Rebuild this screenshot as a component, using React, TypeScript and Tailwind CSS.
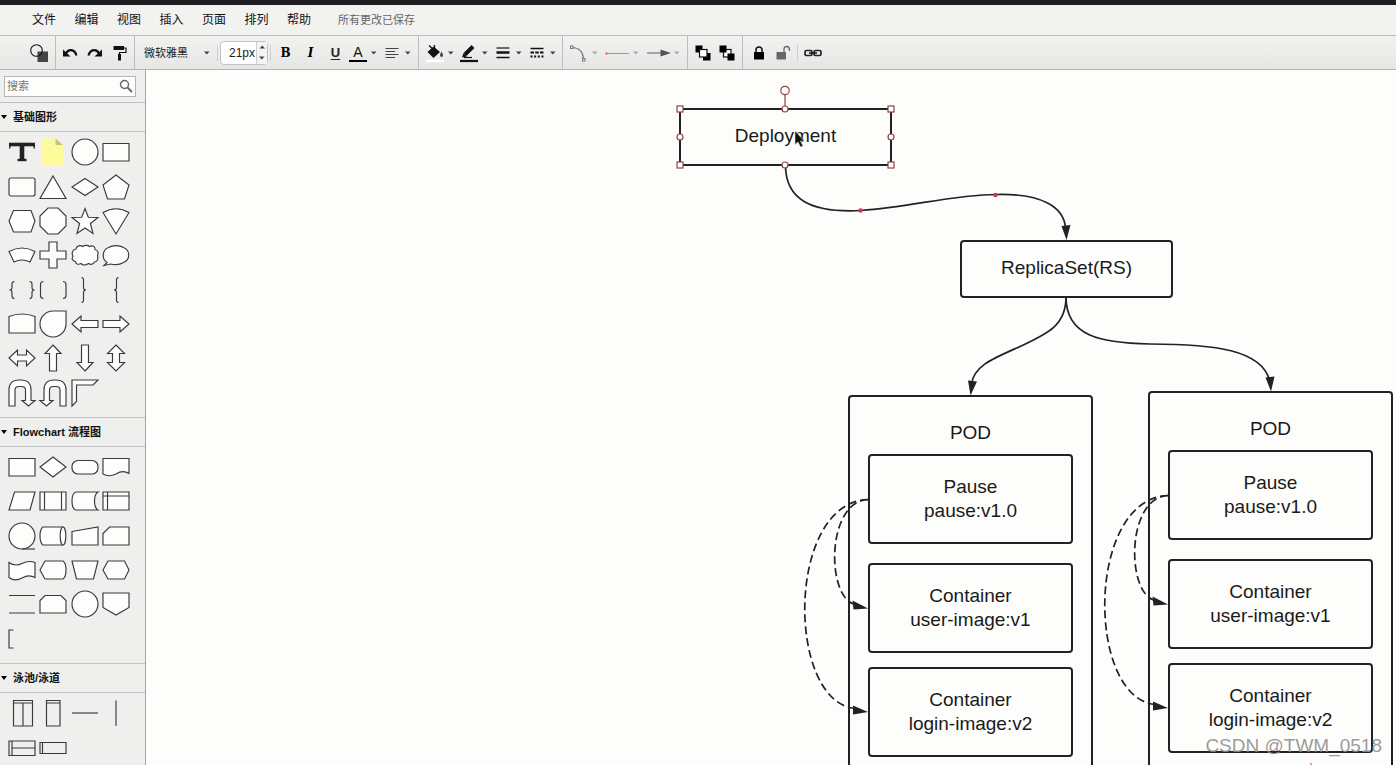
import { useState, type ReactNode } from "react"

const MENU_ITEMS = ["文件", "编辑", "视图", "插入", "页面", "排列", "帮助"]

interface Shape {
  name: string
  art: ReactNode
}

const BASIC_SHAPES: Shape[] = [
  {
    name: "文本",
    art: (
      <g stroke="#222" fill="none">
        <path d="M1 6.500h26" strokeWidth="3.600" />
        <path d="M1.800 5v5.500M26.200 5v5.500" strokeWidth="1.400" />
        <path d="M14 6v16" strokeWidth="4.600" />
        <path d="M9.500 22h9" strokeWidth="2.400" />
      </g>
    ),
  },
  {
    name: "便签",
    art: (
      <g stroke="none">
        <path d="M2.500 .5H17l7.500 7v20h-22z" fill="#fbfb9c" />
        <path d="M16.500 .5v6.500h7.500z" fill="#c4c478" />
      </g>
    ),
  },
  { name: "圆形", art: <circle cx="14" cy="14" r="13" /> },
  { name: "矩形", art: <path d="M1 5.500h26v17.500h-26z" /> },
  { name: "圆角矩形", art: <rect x="1" y="5" width="26" height="18" rx="2" /> },
  { name: "三角形", art: <path d="M14 3l13 22.500H1z" /> },
  { name: "菱形", art: <path d="M14 5.500L27 14 14 22.500 1 14z" /> },
  { name: "五边形", art: <path d="M14 2l13 10-4.500 14h-17L1 12z" /> },
  { name: "六边形", art: <path d="M5.500 3.500h17.500L27 14l-4 11H5.500L1 14z" /> },
  { name: "八边形", art: <path d="M9 1h10l8 8v10l-8 8H9l-8-8V9z" /> },
  {
    name: "星形",
    art: <path d="M14 1.500l3.300 8.700 9.700.3-7.600 6 2.600 10L14 21l-8 5.500 2.600-10-7.600-6 9.700-.3z" />,
  },
  { name: "扇形", art: <path d="M1 5.500Q14-2 27 5.500L14 27z" /> },
  { name: "弧形", art: <path d="M1 10.500Q14 3.500 27 10.500l-5 10.500Q14 17 6 21z" /> },
  { name: "十字", art: <path d="M10 1h8v9h9v8h-9v9h-8v-9H1v-8h9z" /> },
  {
    name: "云",
    art: (
      <path d="M5 8C5.500 4.500 9.500 4 11.500 5.500C13.500 4 17 4 18.500 5.500C22 4 24 5.500 24 8.500C27.500 9.500 27.500 12.500 26.500 14.500C27.500 18 26.500 20.500 23.500 21C22 23.800 19.500 23.800 17.500 22.500C14.500 24.500 12 24.500 10 22.500C7 24 4.500 23 4.500 20.500C1 20 .5 17.500 2 15.500C.5 12.500 1 8.500 5 8z" />
    ),
  },
  {
    name: "对话",
    art: <path d="M5 21.500C-.5 18 0 9 6.500 6.500c4-2.500 11-2.500 15 0c7 3 7 12 0 15c-4 2.500-9 2.500-13 1.500L2 24.500z" />,
  },
  {
    name: "大括号对",
    art: (
      <path
        fill="none"
        d="M6.500 5.500q-2.500 0-2.500 2.500v3.500q0 2.500-2.500 2.500q2.500 0 2.500 2.500v3.500q0 2.500 2.500 2.500M21.500 5.500q2.500 0 2.500 2.500v3.500q0 2.500 2.500 2.500q-2.500 0-2.500 2.500v3.500q0 2.500-2.500 2.500"
      />
    ),
  },
  {
    name: "括号对",
    art: (
      <path
        fill="none"
        d="M4.500 5.500q-3 0-3 3v11q0 3 3 3M24 5.500q3 0 3 3v11q0 3-3 3"
      />
    ),
  },
  {
    name: "右大括号",
    art: (
      <path
        fill="none"
        d="M10.500 1.500q2 0 2 2.500v7.500q0 2.500 2.500 2.500q-2.500 0-2.500 2.500v7.500q0 2.500-2 2.500"
      />
    ),
  },
  {
    name: "左大括号",
    art: (
      <path
        fill="none"
        d="M16.500 1.500q-2 0-2 2.500v7.500q0 2.500-2.500 2.500q2.500 0 2.500 2.500v7.500q0 2.500 2 2.500"
      />
    ),
  },
  { name: "卡片", art: <path d="M1 6.500Q14 1.500 27 6.500V23H1z" /> },
  { name: "水滴", art: <path d="M14 1h13v13a13 13 0 1 1-13-13z" /> },
  { name: "左箭头", art: <path d="M1 14l9-8v4.500h17v7H10V22z" /> },
  { name: "右箭头", art: <path d="M27 14l-9-8v4.500H1v7h17V22z" /> },
  {
    name: "左右箭头",
    art: <path d="M1 14l8.500-8v5h9V6L27 14l-8.500 8v-5h-9v5z" />,
  },
  { name: "上箭头", art: <path d="M14 1l8 8.500h-4.500V27h-7V9.500H6z" /> },
  { name: "下箭头", art: <path d="M14 27l8-8.500h-4.500V1h-7v17.500H6z" /> },
  {
    name: "上下箭头",
    art: <path d="M14 1l8.500 8.500h-5v9h5L14 27l-8.500-8.500h5v-9h-5z" />,
  },
  {
    name: "右转箭头",
    art: (
      <path d="M1 27V11q0-10 10-10h2q10 0 10 10v10.500h4L20.500 27L14 21.500h3.500V11q0-3.500-4-3.500h-2.500q-4 0-4 3.500V27z" />
    ),
  },
  {
    name: "左转箭头",
    art: (
      <path d="M27 27V11q0-10-10-10h-2Q5 1 5 11v10.500H1L7.500 27L14 21.500h-3.500V11q0-3.500 4-3.500h2.500q4 0 4 3.500V27z" />
    ),
  },
  { name: "拐角", art: <path d="M1 1h26l-5 5H5.500v16.500L1 27z" /> },
]

const FLOW_SHAPES: Shape[] = [
  { name: "流程", art: <path d="M1 5.500h26V23H1z" /> },
  { name: "判定", art: <path d="M14 4l13 10-13 10L1 14z" /> },
  {
    name: "开始/结束",
    art: <rect x="1" y="7.500" width="26" height="13.500" rx="6" />,
  },
  { name: "文档", art: <path d="M1 5.500h26v15q-6-4-13 .5q-7 3.500-13 0z" /> },
  { name: "数据", art: <path d="M6.500 5H27l-5 18H1z" /> },
  {
    name: "子流程",
    art: <path d="M1 5h26v18H1zM5.500 5v18M22.500 5v18" />,
  },
  {
    name: "外部数据",
    art: <path d="M27 5H5Q1 6 1 14t4 9h22q-3.500-2-3.500-9T27 5z" />,
  },
  {
    name: "内部存储",
    art: <path d="M1 5h26v18H1zM5.500 5v18M1 9h26" />,
  },
  {
    name: "队列数据",
    art: (
      <>
        <circle cx="14" cy="14" r="13" />
        <path d="M14 27h13" />
      </>
    ),
  },
  {
    name: "数据库",
    art: (
      <>
        <path d="M24.500 5H4Q1 7 1 14t3 9h20.500" />
        <ellipse cx="24" cy="14" rx="2.800" ry="9" />
      </>
    ),
  },
  { name: "人工输入", art: <path d="M1 9.500L27 5v18H1z" /> },
  { name: "卡片", art: <path d="M7.500 5H27v18H1V11.500z" /> },
  {
    name: "条带",
    art: <path d="M1 6.500q6 4.500 13 1T27 6.500v15q-6-3.500-13 .5T1 21.500z" />,
  },
  {
    name: "展示",
    art: <path d="M6 5h18q3 2 3 9t-3 9H6l-5-9z" />,
  },
  { name: "人工操作", art: <path d="M1 5h26l-4.500 18h-17z" /> },
  { name: "准备", art: <path d="M6 5h16.500L27 14l-4.500 9H6l-5-9z" /> },
  { name: "并行模式", art: <path d="M1 5.500h26M1 23h26" /> },
  {
    name: "循环限值",
    art: <path d="M6 5.500h16l5 5V23H1V10.500z" />,
  },
  { name: "页面内引用", art: <circle cx="14" cy="14" r="13" /> },
  { name: "跨页引用", art: <path d="M1 3h26v14.500l-13 7.500-13-7.500z" /> },
  { name: "注释", art: <path fill="none" d="M5.500 5H1v18h4.500" /> },
]

const LANE_SHAPES: Shape[] = [
  {
    name: "垂直泳池",
    art: <path fill="none" d="M5.500 1.500h19V27h-19zM5.500 4h19M15 4v23" />,
  },
  { name: "垂直泳道", art: <path fill="none" d="M7.500 1.500h13.500V27H7.500zM7.500 4H21" /> },
  { name: "水平分隔符", art: <path d="M1 14h26" /> },
  { name: "垂直分隔符", art: <path d="M14 1.500V27" /> },
  {
    name: "水平泳池",
    art: <path fill="none" d="M1 7h26v14.500H1zM4 7v14.500M4 14h23" />,
  },
  { name: "水平泳道", art: <path fill="none" d="M1 8.500h26V19.500H1zM3.500 8.500v11" /> },
]

function Caret({ dim }: { dim?: boolean }) {
  return (
    <svg
      viewBox="0 0 6 4"
      className={`h-1 w-1.5 shrink-0 ${dim ? "fill-[#a9a9a9]" : "fill-[#444]"}`}
    >
      <path d="M0 .5h5.500L2.800 3.500z" />
    </svg>
  )
}

function ToolButton({
  label,
  className,
  children,
}: {
  label: string
  className: string
  children: ReactNode
}) {
  return (
    <button
      type="button"
      aria-label={label}
      className={`flex h-full shrink-0 items-center hover:bg-black/5 ${className}`}
    >
      {children}
    </button>
  )
}

function Icon({ wide, children }: { wide?: boolean; children: ReactNode }) {
  return (
    <svg
      viewBox={wide ? "0 0 26 20" : "0 0 20 20"}
      className={`h-5 shrink-0 ${wide ? "w-[26px]" : "w-5"}`}
      fill="none"
      stroke="#111"
    >
      {children}
    </svg>
  )
}

function Toolbar() {
  const [fontSize, setFontSize] = useState(21)

  return (
    <div className="flex h-[34px] shrink-0 border-b border-[#b4b4b4] bg-linear-to-b from-[#f2f2f1] to-[#e6e6e5]">
      <div className="flex w-14 justify-end border-r border-[#bdbdbd] pr-1.5">
        <ToolButton label="图形" className="">
          <Icon>
            <rect x="8.500" y="8.500" width="10.500" height="10.500" fill="#444" stroke="none" />
            <circle cx="7.500" cy="7.500" r="5.800" strokeWidth="1.100" />
          </Icon>
        </ToolButton>
      </div>

      <div className="flex w-[79px] justify-center border-r border-[#bdbdbd]">
        <ToolButton label="撤销" className="w-[25px] justify-center">
          <Icon>
            <path d="M6 10.500C8 6 14.500 5.500 16.500 12.500" strokeWidth="2.200" />
            <path d="M3 6.500v7h7.500z" fill="#111" stroke="none" />
          </Icon>
        </ToolButton>
        <ToolButton label="恢复" className="w-[25px] justify-center">
          <Icon>
            <path d="M14 10.500C12 6 5.500 5.500 3.500 12.500" strokeWidth="2.200" />
            <path d="M17 6.500v7H9.500z" fill="#111" stroke="none" />
          </Icon>
        </ToolButton>
        <ToolButton label="格式刷" className="w-[25px] justify-center">
          <Icon>
            <path d="M3.500 5h10.500" strokeWidth="4" />
            <path d="M14 5h2v4.500H9.500V12" strokeWidth="1.200" />
            <path d="M9.500 11v6.500" strokeWidth="3" />
          </Icon>
        </ToolButton>
      </div>

      <div className="flex w-[284px] items-center border-r border-[#bdbdbd] pl-2">
        <div className="relative flex h-full w-[74px] items-center">
          <select
            aria-label="字体"
            className="h-6 w-full appearance-none bg-transparent pl-px text-[11px] leading-6 text-[#222] outline-none"
          >
            <option>微软雅黑</option>
            <option>宋体</option>
            <option>黑体</option>
          </select>
          <span className="pointer-events-none absolute right-[7px] flex">
            <Caret />
          </span>
        </div>
        <div className="h-4 w-px bg-[#cfcfcf]" />
        <div className="ml-0.5 flex h-6 w-12 rounded-sm border border-[#c3c3c3] bg-white">
          <input
            aria-label="字号"
            value={`${fontSize}px`}
            onChange={(e) => setFontSize(parseInt(e.target.value) || 0)}
            className="w-[35px] min-w-0 bg-transparent pr-px text-right text-xs text-[#222] outline-none"
          />
          <div className="flex flex-1 flex-col border-l border-[#cfcfcf] bg-[#f3f3f3]">
            <button
              type="button"
              aria-label="增大字号"
              onClick={() => setFontSize(fontSize + 1)}
              className="flex flex-1 rotate-180 items-center justify-center"
            >
              <Caret />
            </button>
            <button
              type="button"
              aria-label="减小字号"
              onClick={() => setFontSize(fontSize - 1)}
              className="flex flex-1 items-center justify-center"
            >
              <Caret />
            </button>
          </div>
        </div>
        <div className="ml-0.5 h-4 w-px bg-[#cfcfcf]" />
        <ToolButton
          label="粗体"
          className="ml-0.5 w-[25px] justify-center font-['DejaVu_Serif',serif] text-xs font-bold text-black"
        >
          B
        </ToolButton>
        <ToolButton
          label="斜体"
          className="w-[25px] justify-center font-['DejaVu_Serif',serif] text-xs font-bold text-black italic"
        >
          I
        </ToolButton>
        <ToolButton
          label="下划线"
          className="w-[25px] justify-center text-[13px] font-bold text-[#222] underline underline-offset-2"
        >
          U
        </ToolButton>
        <ToolButton label="字体颜色" className="w-[34px] gap-[3px]">
          <span className="flex w-5 flex-col items-center">
            <span className="text-sm leading-4 text-[#111]">A</span>
            <span className="h-0.5 w-[18px] bg-black" />
          </span>
          <Caret />
        </ToolButton>
        <ToolButton label="对齐方式" className="w-[34px] gap-[3px]">
          <Icon>
            <path
              d="M3.500 5.500h13M3.500 8.500h9.500M3.500 11.500h13M3.500 14.500h9.500"
              strokeWidth="1.100"
              stroke="#444"
            />
          </Icon>
          <Caret />
        </ToolButton>
      </div>

      <div className="flex w-36 border-r border-[#bdbdbd] pl-1.5">
        <ToolButton label="填充颜色" className="w-[34px] gap-[3px]">
          <Icon>
            <path d="M1 18h18" stroke="#fff" strokeWidth="2.500" />
            <path d="M2.500 9L8.500 3.500 15 9l-6.500 6z" fill="#111" stroke="none" />
            <path d="M4 2.500l5 4.500M9.500 2v6" strokeWidth="1.300" />
            <path d="M16.500 8.500q3 5 0 5.500q-3-.5 0-5.500z" fill="#444" stroke="none" />
          </Icon>
          <Caret />
        </ToolButton>
        <ToolButton label="线条颜色" className="w-[34px] gap-[3px]">
          <Icon>
            <path d="M1 18h18" strokeWidth="2.200" />
            <path d="M6 11.500L14 3.500" strokeWidth="4" />
            <path d="M3 14.500l1.500-4.500 3.500 3.500z" fill="#111" stroke="none" />
            <path d="M5 14.500h8" strokeWidth="1.200" />
          </Icon>
          <Caret />
        </ToolButton>
        <ToolButton label="线条宽度" className="w-[34px] gap-[3px]">
          <Icon>
            <path d="M3.500 5h13" strokeWidth="1.200" />
            <path d="M3.500 9.500h13" strokeWidth="2.500" />
            <path d="M3.500 14.500h13" strokeWidth="1.500" />
          </Icon>
          <Caret />
        </ToolButton>
        <ToolButton label="线条样式" className="w-[34px] gap-[3px]">
          <Icon>
            <path d="M3.500 5.500h13" strokeWidth="1.500" />
            <path d="M3.500 9.500h13" strokeWidth="1.800" strokeDasharray="3.500 1.250" />
            <path d="M3.500 13.500h13" strokeWidth="1.800" strokeDasharray="2 1.650" />
          </Icon>
          <Caret />
        </ToolButton>
      </div>

      <div className="flex w-[125px] border-r border-[#bdbdbd]">
        <ToolButton label="连线类型" className="w-[41px] gap-[3px]">
          <Icon wide>
            <path d="M9 4.500Q20 5 20.500 16" stroke="#777" strokeWidth="1.200" />
            <rect x="7.500" y="3" width="2.500" height="2.500" stroke="#777" fill="#eee" />
            <rect x="19.500" y="15.500" width="2.500" height="2.500" stroke="#777" fill="#eee" />
          </Icon>
          <Caret dim />
        </ToolButton>
        <ToolButton label="起点" className="w-[41px] gap-[3px]">
          <Icon wide>
            <path d="M2 10.500h23" stroke="#999" />
            <circle cx="2.500" cy="10.500" r="1.200" fill="#d66" stroke="none" />
          </Icon>
          <Caret dim />
        </ToolButton>
        <ToolButton label="终点" className="w-[41px] gap-[3px]">
          <Icon wide>
            <path d="M2 10h16" stroke="#777" strokeWidth="1.200" />
            <path d="M15.500 6.500L26 10l-10.500 3.500z" fill="#555" stroke="none" />
          </Icon>
          <Caret dim />
        </ToolButton>
      </div>

      <div className="flex w-[55px] justify-center border-r border-[#bdbdbd]">
        <ToolButton label="置于顶层" className="w-6 justify-center">
          <Icon>
            <path d="M2.500 2.500h7v7h-7zM10 10h7.500v7.500H10z" fill="#000" stroke="none" />
            <rect x="6.500" y="6.500" width="7.500" height="7.500" fill="#fff" strokeWidth="1.200" />
          </Icon>
        </ToolButton>
        <ToolButton label="置于底层" className="w-6 justify-center">
          <Icon>
            <rect x="6.500" y="6.500" width="7.500" height="7.500" fill="#fff" strokeWidth="1.200" />
            <path d="M2.500 2.500h7v7h-7zM10.500 10.500h7v7h-7z" fill="#000" stroke="none" />
          </Icon>
        </ToolButton>
      </div>

      <div className="flex items-center pl-1">
        <ToolButton label="锁定" className="w-6 justify-center">
          <Icon>
            <rect x="5" y="9" width="10" height="7.500" fill="#000" stroke="none" />
            <path d="M7 9V7q0-3 3-3t3 3v2" strokeWidth="1.500" />
          </Icon>
        </ToolButton>
        <ToolButton label="解锁" className="w-6 justify-center">
          <Icon>
            <rect x="3.500" y="9" width="9.500" height="7.500" fill="#666" stroke="none" />
            <path d="M11 9V6.500q0-3 2.700-3t2.700 3V8" strokeWidth="1.300" stroke="#666" />
          </Icon>
        </ToolButton>
        <div className="ml-0.5 h-4 w-px bg-[#cfcfcf]" />
        <ToolButton label="链接" className="ml-1 w-[22px] justify-center">
          <Icon>
            <rect x="2" y="7.500" width="7" height="5" rx="1.500" strokeWidth="1.700" stroke="#222" />
            <rect x="11" y="7.500" width="7" height="5" rx="1.500" strokeWidth="1.700" stroke="#222" />
            <path d="M6 10h8" strokeWidth="1.700" stroke="#222" />
          </Icon>
        </ToolButton>
      </div>
    </div>
  )
}

function ShapeSection({
  title,
  shapes,
  gridClass,
}: {
  title: string
  shapes: Shape[]
  gridClass: string
}) {
  const [open, setOpen] = useState(true)

  return (
    <section className="border-t border-[#c4c4c4]">
      <button
        type="button"
        onClick={() => setOpen(!open)}
        className="flex h-[29px] w-full items-center gap-1.5 border-b border-[#c4c4c4] pl-px text-left text-[11px] font-bold text-[#111]"
      >
        <svg viewBox="0 0 6 4" className="h-1 w-1.5 fill-black">
          <path d="M0 0h6L3 4z" />
        </svg>
        {title}
      </button>
      {open && (
        <div className={`mt-[3px] mb-[7px] grid grid-cols-4 pr-[13px] pl-1.5 ${gridClass}`}>
          {shapes.map((shape, i) => (
            <button
              key={i}
              type="button"
              aria-label={shape.name}
              className="flex items-center justify-center"
            >
              <svg
                viewBox="0 0 28 28"
                className="size-7 overflow-visible"
                fill="#fdfdfb"
                stroke="#3a3a3a"
                strokeWidth="1.150"
              >
                {shape.art}
              </svg>
            </button>
          ))}
        </div>
      )}
    </section>
  )
}

function Sidebar() {
  return (
    <aside className="w-[146px] shrink-0 overflow-hidden border-r border-[#a3a3a3] bg-[#efefee]">
      <div className="flex h-8 items-center pr-[9px] pl-1">
        <div className="flex h-[21px] w-full items-center border border-[#b5b5b5] bg-[#fdfdfc] px-0.5">
          <input
            type="text"
            aria-label="搜索"
            placeholder="搜索"
            className="h-full w-full min-w-0 bg-transparent text-[11px] outline-none placeholder:text-[#777]"
          />
          <svg viewBox="0 0 14 14" className="size-3.5 shrink-0" fill="none" stroke="#666">
            <circle cx="5.500" cy="5.500" r="4" strokeWidth="1.400" />
            <path d="M8.500 8.500l4.500 4.500" strokeWidth="1.800" />
          </svg>
        </div>
      </div>
      <ShapeSection title="基础图形" shapes={BASIC_SHAPES} gridClass="h-[275px] grid-rows-8" />
      <ShapeSection title="Flowchart 流程图" shapes={FLOW_SHAPES} gridClass="h-[206px] grid-rows-6" />
      <ShapeSection title="泳池/泳道" shapes={LANE_SHAPES} gridClass="h-[69px] grid-rows-2" />
    </aside>
  )
}

function Box({ lines, className }: { lines: string[]; className: string }) {
  return (
    <div
      className={`flex flex-col items-center justify-center border-2 border-[#222] ${className}`}
    >
      {lines.map((line) => (
        <span key={line}>{line}</span>
      ))}
    </div>
  )
}

function Pod({ className }: { className: string }) {
  return (
    <div
      className={`absolute flex h-[440px] w-[245px] flex-col rounded-[4px] border-2 border-[#222] px-[18px] pt-6 ${className}`}
    >
      <span className="text-center">POD</span>
      <Box lines={["Pause", "pause:v1.0"]} className="mt-[9px] h-[90px] rounded-[4px]" />
      <Box lines={["Container", "user-image:v1"]} className="mt-[19px] h-[90px] rounded-[4px]" />
      <Box lines={["Container", "login-image:v2"]} className="mt-[14px] h-[90px] rounded-[4px]" />
    </div>
  )
}

// loops from a pod's pause box to its two containers
function PodLinks({ x, y }: { x: number; y: number }) {
  return (
    <g transform={`translate(${x} ${y})`}>
      <g strokeDasharray="8 4">
        <path d="M0 0C-42 2-42 98-13 105" />
        <path d="M0 0C-82 3-82 202-13 209" />
      </g>
      <g fill="#222" stroke="none">
        <path d="M0 109l-15.500-8 1 9z" />
        <path d="M0 212.500l-15-6.500v9z" />
      </g>
    </g>
  )
}

const CORNERS = [
  [534, 39],
  [745, 39],
  [534, 95],
  [745, 95],
]

const MIDPOINTS = [
  [639, 39],
  [639, 95],
  [534, 67],
  [745, 67],
]

function Canvas() {
  return (
    <main className="relative flex-1 overflow-hidden bg-[#fdfdfb] text-[19px] leading-6 text-[#1a1a1a]">
      <Box
        lines={["Deployment"]}
        className="absolute top-[38px] left-[533px] h-[58px] w-[213px] pb-0.5"
      />
      <Box
        lines={["ReplicaSet(RS)"]}
        className="absolute top-[170px] left-[814px] h-[58px] w-[213px] rounded-[4px] pb-0.5"
      />
      <Pod className="top-[325px] left-[702px]" />
      <Pod className="top-[321px] left-[1002px]" />

      <svg
        className="pointer-events-none absolute inset-0 h-full w-full"
        fill="none"
        stroke="#222"
        strokeWidth="1.700"
      >
        <path d="M639.500 95C639.500 129 664 143 715 140.500C766 137 804 125 851 124.500C896 123.500 918 137 919.500 158" />
        <path d="M920 227C920 256 901 264 873 277C846 289 828 296 825.500 314" />
        <path d="M920 227C920 266 954 273 1004 274C1069 274 1115 280 1123.500 310" />
        <g fill="#222" stroke="none">
          <path d="M920.500 170l-5-14 9-1z" />
          <path d="M824.500 325.500l-2.500-15 9 1z" />
          <path d="M1125 321.500l-5.500-14 9-1z" />
        </g>
        <PodLinks x={722} y={429.5} />
        <PodLinks x={1022} y={425.5} />

        {/* selection handles */}
        <g stroke="#8f4545" strokeWidth="1.200" fill="#fff">
          <path d="M639 25v11" />
          <circle cx="639" cy="20.500" r="4.200" />
          {CORNERS.map(([x, y]) => (
            <rect key={`${x}-${y}`} x={x - 3} y={y - 3} width="6" height="6" />
          ))}
          {MIDPOINTS.map(([x, y]) => (
            <circle key={`${x}-${y}`} cx={x} cy={y} r="3" />
          ))}
        </g>
        <g fill="#d2374f" stroke="none">
          <circle cx="714.500" cy="140.500" r="2.200" />
          <circle cx="849.500" cy="125" r="2.200" />
          <path d="M1164 692l3 4h-2z" />
        </g>

        <path
          d="M649 61v13.500l3-2.500 2.500 5 2.500-1-2.500-5h4z"
          fill="#111"
          stroke="#ddd"
          strokeWidth="0.600"
        />
      </svg>

      <div className="absolute right-[14px] bottom-[7px] text-[19px] text-[#8f8f8f]/90">
        CSDN @TWM_0518
      </div>
    </main>
  )
}

export default function App() {
  return (
    <div className="flex h-screen flex-col overflow-hidden bg-[#fdfdfb] font-['Liberation_Sans','Noto_Sans_CJK_SC',sans-serif]">
      <div className="h-[5px] shrink-0 bg-[#1f1f23]" />
      <header className="flex h-[31px] shrink-0 items-center border-b border-[#bdbdbd] bg-[#f2f2f1] pl-8">
        <nav className="flex w-[279px] justify-between text-xs text-[#111]">
          {MENU_ITEMS.map((item) => (
            <button key={item} type="button">
              {item}
            </button>
          ))}
        </nav>
        <span className="ml-[27px] text-[11px] text-[#666]">所有更改已保存</span>
      </header>
      <Toolbar />
      <div className="flex min-h-0 flex-1">
        <Sidebar />
        <Canvas />
      </div>
    </div>
  )
}
